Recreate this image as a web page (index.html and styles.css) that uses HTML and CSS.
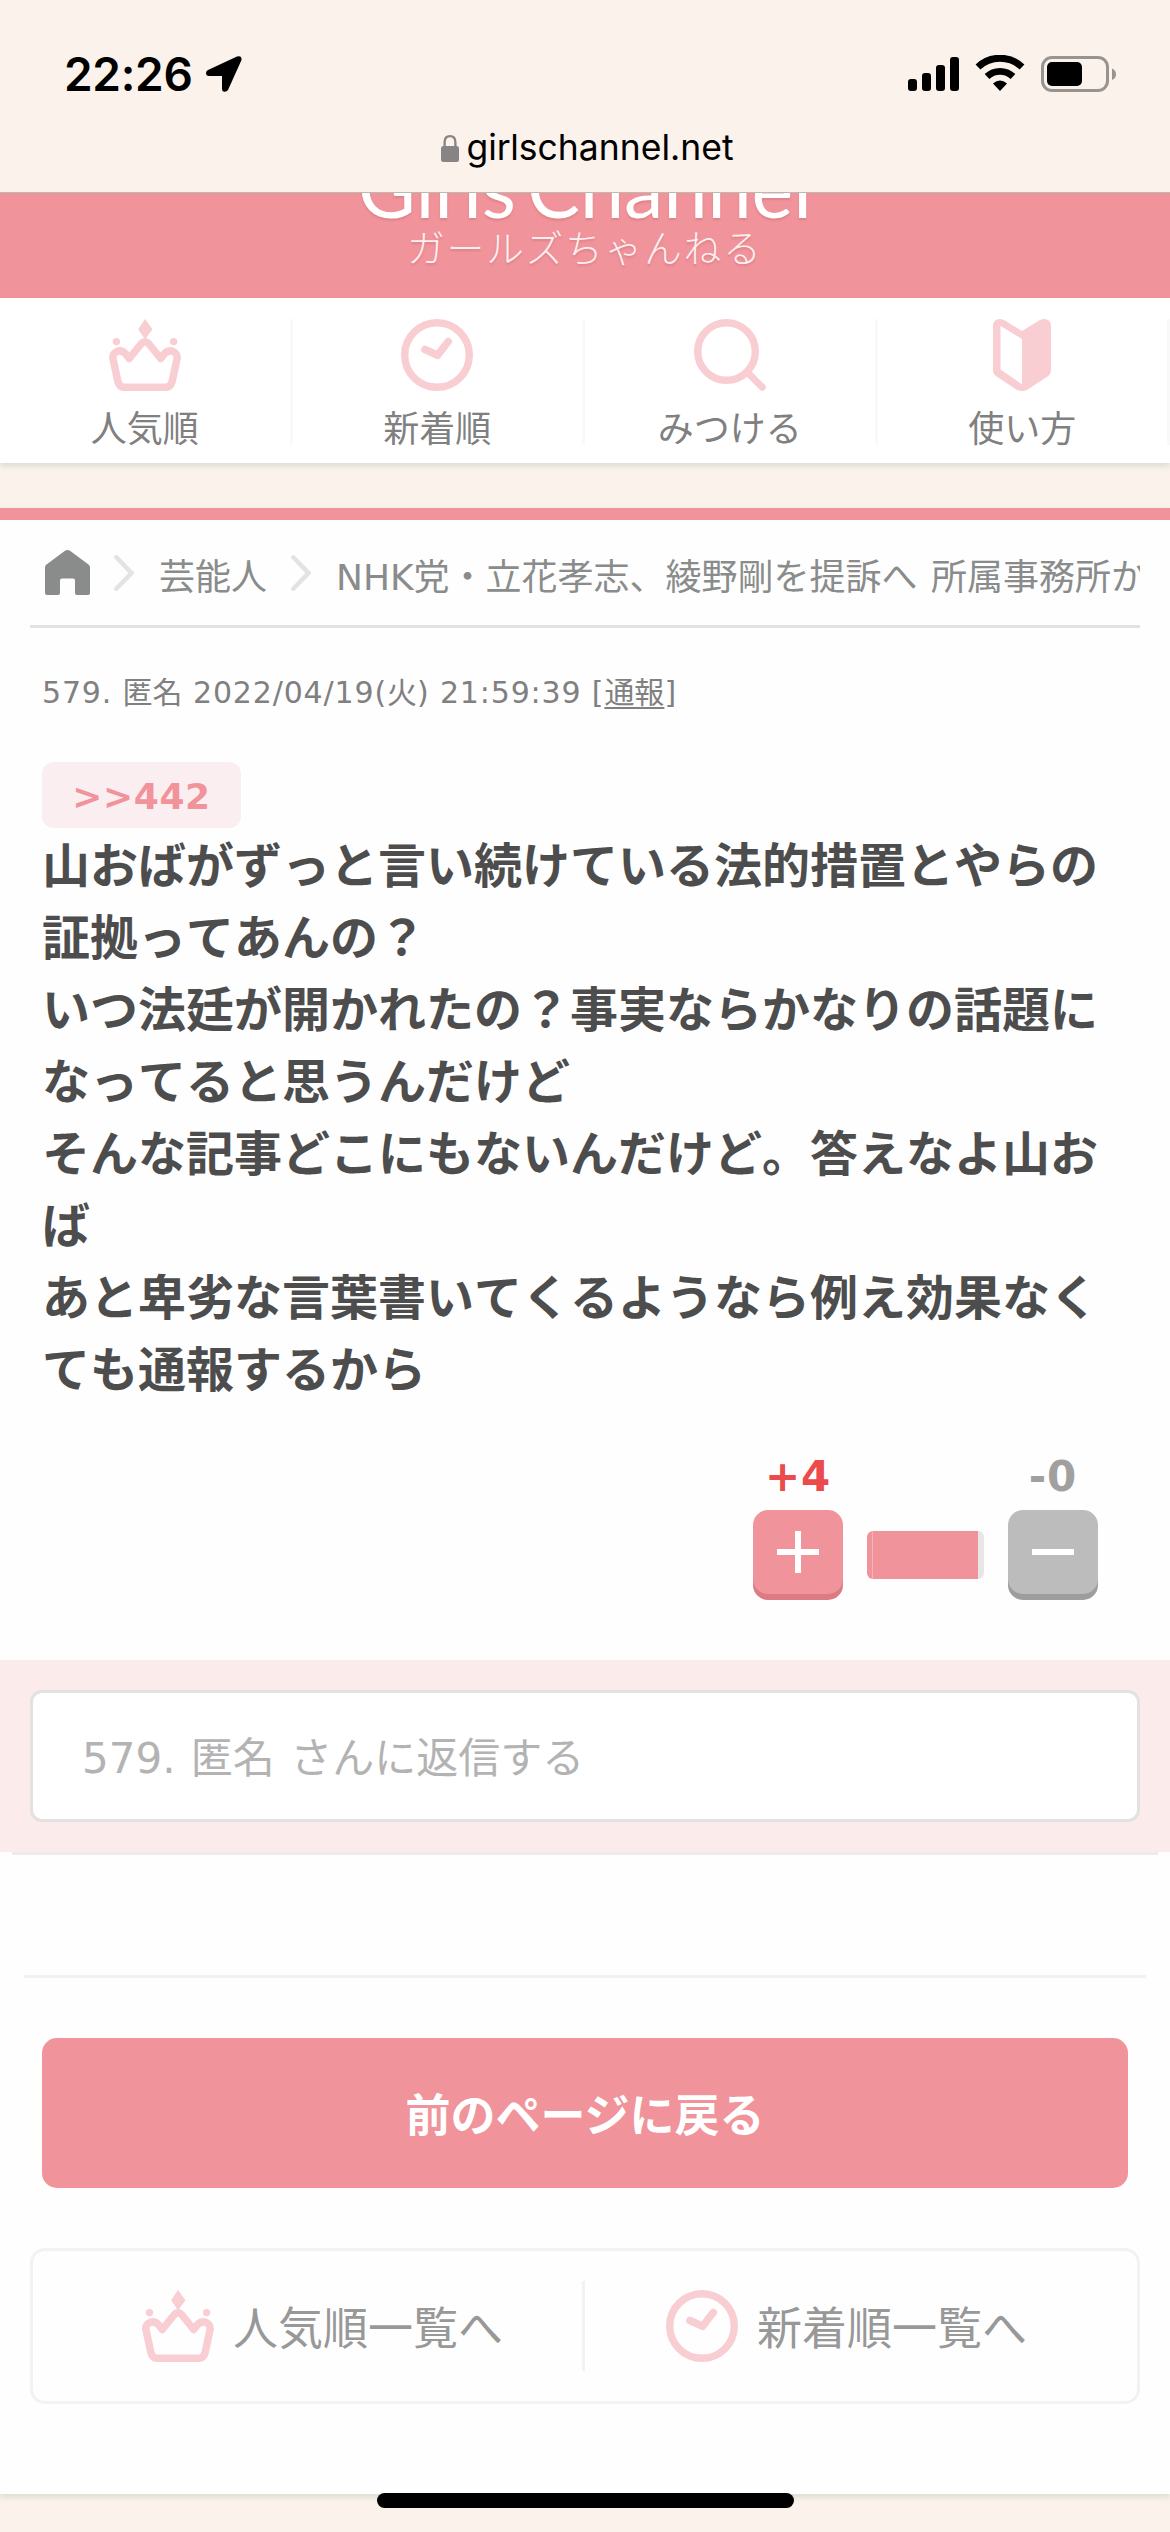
FILE: index.html
```html
<!DOCTYPE html>
<html lang="ja">
<head>
<meta charset="utf-8">
<title>ガールズちゃんねる</title>
<link rel="stylesheet" href="styles.css">
</head>
<body>
<svg width="0" height="0" class="defs" aria-hidden="true">
  <symbol id="crown" viewBox="0 0 72 72">
    <path d="M36 0L43.500 10.200 36 20.500 29.200 10.200Z" fill="currentColor"/>
    <circle cx="7.400" cy="22.600" r="3.700" fill="currentColor"/>
    <circle cx="64.600" cy="22.600" r="3.700" fill="currentColor"/>
    <path d="M20.300 39.500L16.500 34.600C11 29 2.500 33 4 40L9 63Q10.500 68.200 15 68.200H57Q61.500 68.200 63 63L68 40C69.500 33 61 29 55.500 34.600L51.700 39.500 40 25Q36 20.500 32 25Z" fill="none" stroke="currentColor" stroke-width="7.500" stroke-linejoin="round"/>
  </symbol>
  <symbol id="clock" viewBox="0 0 72 72">
    <circle cx="36" cy="36" r="32.300" fill="none" stroke="currentColor" stroke-width="7.400"/>
    <path d="M24 30.500L36.500 36.300 47.200 22.500" fill="none" stroke="currentColor" stroke-width="7.600" stroke-linecap="round" stroke-linejoin="round"/>
  </symbol>
</svg>

<div class="statusbar">
  <div class="status-row">
    <span class="time">22:26</span>
    <svg class="locate" viewBox="0 0 36 36"><path d="M2 14L31 .5Q36-1 35.500 4L22 34Q20 36.500 17.500 35.500 16 35 16 32.500V20H3Q0 20 0 17 0 15 2 14Z"/></svg>
    <svg class="indicators" viewBox="0 0 210 38">
      <rect x="0" y="24" width="9" height="12" rx="3"/><rect x="14" y="18" width="9" height="18" rx="3"/><rect x="28" y="10" width="9" height="26" rx="3"/><rect x="42" y="2" width="9" height="34" rx="3"/>
      <path d="M70 12A32 32 0 0 1 114 12" fill="none" stroke="#000" stroke-width="7"/>
      <path d="M79 21.500A19 19 0 0 1 105 21.500" fill="none" stroke="#000" stroke-width="6.800"/>
      <path d="M92 36L85 28.500Q92 22.500 99 28.500Z"/>
      <rect x="134.500" y="2.500" width="65" height="33" rx="9.500" fill="none" stroke="#979390" stroke-width="3"/>
      <rect x="139" y="7" width="35" height="24" rx="5"/>
      <path d="M204 13.500Q208 15 208 19.500 208 23 204 25Z" fill="#979390"/>
    </svg>
  </div>
  <div class="url-row">
    <svg class="lock" viewBox="0 0 18 27"><rect y="11" width="18" height="16" rx="2.500" fill="#868485"/><path d="M3.600 12V7.500Q3.600 1.200 9 1.200T14.400 7.500V12" fill="none" stroke="#868485" stroke-width="2.300"/></svg>
    <span class="url">girlschannel.net</span>
  </div>
</div>

<header class="brand">
  <div class="brand-name">Girls Channel</div>
  <div class="brand-sub">ガールズちゃんねる</div>
</header>

<nav class="menu">
  <a class="menu-item"><svg class="icon"><use href="#crown"/></svg><span>人気順</span></a>
  <a class="menu-item"><svg class="icon"><use href="#clock"/></svg><span>新着順</span></a>
  <a class="menu-item"><svg class="icon" viewBox="0 0 72 72"><circle cx="32.500" cy="32.500" r="28.800" fill="none" stroke="currentColor" stroke-width="7.400"/><path d="M55 55L68.300 68.300" stroke="currentColor" stroke-width="7" stroke-linecap="round"/></svg><span>みつける</span></a>
  <a class="menu-item"><svg class="icon" viewBox="-7 0 72 72"><path fill="currentColor" fill-rule="evenodd" d="M0 7Q0 0 7 0 9.500 0 12 1.500L29 12 46 1.500Q48.500 0 51 0 58 0 58 7V51Q58 55 54.500 57.500L34 71Q29 73 24 71L3.500 57.500Q0 55 0 51ZM7.500 7V50.500L29 65.300V20Z"/></svg><span>使い方</span></a>
</nav>

<main class="page">
  <div class="crumbs">
    <svg class="home" viewBox="0 0 45 45"><path d="M20 .8Q22.500-.8 25 .8L43.500 14.500Q45 15.700 45 17.500V43Q45 45 43 45H32Q30 45 30 43V30.500Q30 28.500 28 28.500H17Q15 28.500 15 30.500V43Q15 45 13 45H2Q0 45 0 43V17.500Q0 15.700 1.500 14.500Z" fill="#8a8c8b"/></svg>
    <svg class="chevron" viewBox="0 0 20 36"><path d="M2.300 2.300L17.500 18 2.300 33.700" fill="none" stroke="#e3e3e3" stroke-width="4.500" stroke-linecap="round"/></svg>
    <span>芸能人</span>
    <svg class="chevron" viewBox="0 0 20 36"><path d="M2.300 2.300L17.500 18 2.300 33.700" fill="none" stroke="#e3e3e3" stroke-width="4.500" stroke-linecap="round"/></svg>
    <span class="topic">NHK党・立花孝志、綾野剛を提訴へ 所属事務所から</span>
  </div>

  <article class="comment">
    <p class="meta">579. <span class="cjk">匿名</span> 2022/04/19(<span class="cjk">火</span>) 21:59:39 [<a class="report">通報</a>]</p>
    <a class="anchor">&gt;&gt;442</a>
    <p class="body">山おばがずっと言い続けている法的措置とやらの証拠ってあんの？<br>いつ法廷が開かれたの？事実ならかなりの話題になってると思うんだけど<br>そんな記事どこにもないんだけど。答えなよ山おば<br>あと卑劣な言葉書いてくるようなら例え効果なくても通報するから</p>
    <div class="votes">
      <div class="vote plus"><span class="count">+4</span><svg class="button" viewBox="0 0 90 84"><path d="M24 42H66M45 21V63" stroke="#fff" stroke-width="6"/></svg></div>
      <div class="gauge"></div>
      <div class="vote minus"><span class="count">-0</span><svg class="button" viewBox="0 0 90 84"><path d="M24 42H66" stroke="#fff" stroke-width="6"/></svg></div>
    </div>
  </article>

  <div class="reply"><div class="reply-field">579. 匿名 さんに返信する</div></div>
  <hr class="line first">
  <hr class="line second">
  <a class="back">前のページに戻る</a>
  <div class="lists">
    <a class="list-link"><svg class="icon"><use href="#crown"/></svg><span>人気順一覧へ</span></a>
    <a class="list-link"><svg class="icon"><use href="#clock"/></svg><span>新着順一覧へ</span></a>
  </div>
</main>
<footer class="bottom"><div class="home-indicator"></div></footer>
</body>
</html>
```
FILE: styles.css
```css
* { box-sizing: border-box; }
body {
  margin: 0;
  width: 1170px;
  height: 2532px;
  overflow: hidden;
  background: #faf2eb;
  color: #808080;
  font-family: "DejaVu Sans", "Noto Sans CJK JP", sans-serif;
  font-kerning: none;
  text-spacing-trim: space-all;
}
p, hr { margin: 0; border: 0; }
svg { display: block; flex: none; }
.defs { position: absolute; }

.statusbar {
  height: 193px;
  padding-top: 43px;
  border-bottom: 1px solid #b9bbb1;
  font-family: Inter, sans-serif;
  color: #000;
}
.status-row { display: flex; align-items: center; height: 62px; padding: 0 52px 0 64px; }
.time { width: 142px; font-size: 46px; font-weight: 600; line-height: 62px; letter-spacing: -.3px; }
.locate { width: 36px; height: 36px; }
.indicators { width: 210px; height: 38px; margin-left: auto; }
.url-row { display: flex; align-items: center; justify-content: center; height: 86px; gap: 7px; padding-left: 5px; }
.lock { width: 18px; height: 27px; }
.url { font-size: 35.500px; line-height: 84px; letter-spacing: 0; }

.brand {
  height: 105px;
  overflow: hidden;
  background: #f0939a;
  color: #fff;
  text-align: center;
  text-shadow: 0 2px 2px rgba(170, 80, 90, .25);
}
.brand-name { margin-top: -44px; height: 77px; font: 400 79px/78px Lato, sans-serif; word-spacing: -9px; }
.brand-sub { height: 40px; font: 300 37.500px/40px "Noto Sans CJK JP", sans-serif; letter-spacing: 2px; color: #fdeff0; }

.menu {
  display: grid;
  grid-template-columns: repeat(4, 292.5px);
  height: 165px;
  padding-top: 21px;
  background: #fff;
  box-shadow: 0 3px 6px rgba(130, 150, 130, .25);
}
.menu-item {
  display: flex;
  flex-direction: column;
  align-items: center;
  gap: 15px;
  height: 126px;
  border-right: 3px solid #f9f9f9;
}
.menu-item span { font-size: 36px; line-height: 48px; }
.icon { width: 72px; height: 72px; color: #f8ced3; }

.page {
  margin-top: 45px;
  height: 1986px;
  border-top: 12px solid #f0939a;
  background: #fefefe;
  box-shadow: 0 3px 6px rgba(130, 150, 130, .25);
}
.crumbs {
  display: flex;
  align-items: center;
  height: 108px;
  margin: 0 30px;
  padding: 0 0 0 15px;
  border-bottom: 3px solid #e2e2e2;
  overflow: hidden;
  white-space: nowrap;
  font-size: 36px;
  color: #8a8c8b;
}
.crumbs span { padding-top: 2px; }
.topic { word-spacing: 2px; }
.home { width: 45px; height: 45px; }
.chevron { width: 20px; height: 36px; margin: 0 25px 0 24px; }

.comment { height: 1032px; padding: 41px 42px 0; }
.meta { height: 93px; font-size: 30px; line-height: 48px; letter-spacing: .85px; color: #808080; }
.cjk, .report { letter-spacing: 0; }
.report { text-decoration: underline; text-underline-offset: 4px; text-decoration-thickness: 2px; }
.anchor {
  display: flex;
  align-items: center;
  justify-content: center;
  width: 199px;
  height: 66px;
  padding-top: 2px;
  border-radius: 12px;
  background: #fbeef1;
  color: #f0939a;
  font-size: 36px;
  font-weight: 700;
  letter-spacing: .6px;
}
.body {
  margin-top: -2px;
  font: 700 48px/72px "Noto Sans CJK JP", sans-serif;
  font-kerning: none;
  color: #4d4d4d;
  line-break: anywhere;
}
.votes {
  display: flex;
  justify-content: flex-end;
  gap: 24px;
  padding: 48px 30px 0 0;
}
.vote { width: 90px; }
.count { display: block; height: 60px; font-size: 42px; font-weight: 700; line-height: 54px; text-align: center; letter-spacing: .8px; }
.plus { color: #ec4a4d; }
.minus { color: #a0a0a0; }
.button { width: 90px; height: 84px; border-radius: 15px; }
.plus .button { background: #f0939a; box-shadow: 0 6px #dc7b83; }
.minus .button { background: #bcbcbc; box-shadow: 0 6px #9d9d9d; }
.gauge {
  width: 117px;
  height: 48px;
  margin-top: 81px;
  border-radius: 6px;
  background: linear-gradient(90deg, #f0939a 5px, #f5b4b9 5px 6px, #f0939a 6px 111px, #e6e6e6 111px);
}

.reply { height: 192px; padding: 30px; background: #fbebea; }
.reply-field {
  height: 132px;
  padding-left: 49px;
  border: 3px solid #e2e2e2;
  border-radius: 12px;
  background: #fff;
  color: #b3b3b3;
  font-size: 42px;
  line-height: 132px;
  word-spacing: 2px;
}
.line { height: 3px; }
.first { margin: 0 12px; background: #ececec; }
.second { margin: 120px 24px 60px; background: #f1f1f1; }
.back {
  display: block;
  height: 150px;
  margin: 0 42px 60px;
  border-radius: 15px;
  background: #f0939a;
  color: #fff;
  font: 700 45px/149px "Noto Sans CJK JP", sans-serif;
  text-align: center;
}
.lists {
  display: grid;
  grid-template-columns: 552px 552px;
  align-items: center;
  height: 156px;
  margin: 0 30px;
  border: 3px solid #f2f2f2;
  border-radius: 15px;
  color: #989898;
  font-size: 45px;
}
.list-link { display: flex; align-items: center; height: 90px; gap: 19px; padding-left: 109px; }
.list-link span { padding-bottom: 2px; }
.list-link:first-child { border-right: 3px solid #f2f2f2; }
.list-link + .list-link { padding-left: 81px; }
.bottom { position: relative; height: 38px; }
.home-indicator { position: absolute; left: 377px; top: -1px; width: 417px; height: 15px; border-radius: 8px; background: #000; }
```
